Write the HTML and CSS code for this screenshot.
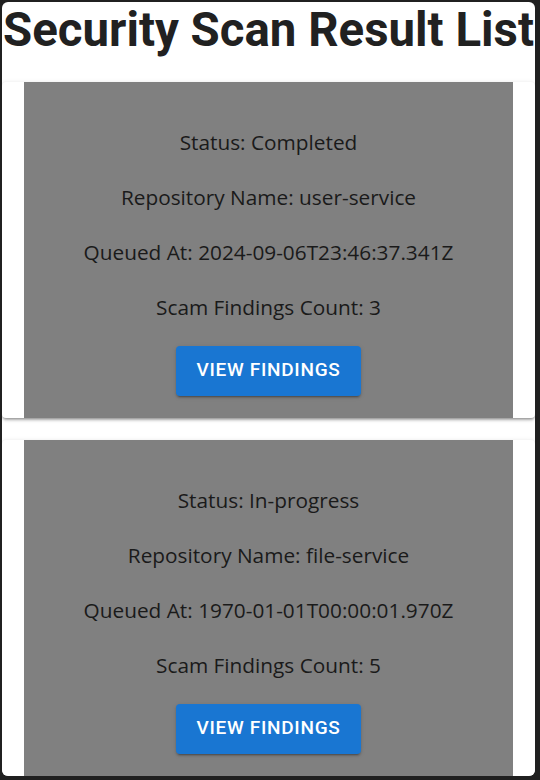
FILE: index.html
```html
<!DOCTYPE html>
<html lang="en">
<head>
<meta charset="utf-8">
<title>Security Scan Result List</title>
<link rel="stylesheet" href="styles.css">
</head>
<body>
<div class="window">
  <h1 class="title">Security Scan Result List</h1>
  <div class="list">
    <div class="card">
      <div class="content">
        <p class="line">Status: Completed</p>
        <p class="line">Repository Name: user-service</p>
        <p class="line">Queued At: 2024-09-06T23:46:37.341Z</p>
        <p class="line">Scam Findings Count: 3</p>
        <button class="btn">View Findings</button>
      </div>
    </div>
    <div class="card">
      <div class="content">
        <p class="line">Status: In-progress</p>
        <p class="line">Repository Name: file-service</p>
        <p class="line">Queued At: 1970-01-01T00:00:01.970Z</p>
        <p class="line">Scam Findings Count: 5</p>
        <button class="btn">View Findings</button>
      </div>
    </div>
  </div>
</div>
</body>
</html>
```

FILE: styles.css
```css
html, body {
  margin: 0;
  padding: 0;
  background: #202020;
  height: 780px;
  overflow: hidden;
}
.window {
  margin: 2px 5px 0 2px;
  height: 774px;
  background: #fff;
  border-radius: 6px;
  overflow: hidden;
}
.title {
  margin: 0 0 24px;
  font-family: Roboto, "Liberation Sans", sans-serif;
  font-weight: 700;
  font-size: 47.4px;
  line-height: 56px;
  color: #212121;
  text-align: center;
  white-space: nowrap;
}
.list {
  display: flex;
  flex-direction: column;
  gap: 22px;
}
.card {
  background: #fff;
  border-radius: 4px;
  box-shadow: 0 3px 3px -1px rgba(0,0,0,0.25), 0 1px 2px 0 rgba(0,0,0,0.14), 0 1px 5px 0 rgba(0,0,0,0.12);
  padding: 0 22px;
}
.content {
  background: #808080;
  display: flex;
  flex-direction: column;
  align-items: center;
  padding: 45px 0 22px;
}
.line {
  margin: 0 0 25px;
  font-family: "Open Sans", "Noto Sans", sans-serif;
  font-size: 20.8px;
  line-height: 30px;
  color: #1a1a1a;
}
.line:nth-of-type(4) {
  margin-bottom: 24px;
}
.btn {
  border: 0;
  background: #1976d2;
  color: #fff;
  font-family: Roboto, "Liberation Sans", sans-serif;
  font-weight: 500;
  font-size: 19px;
  letter-spacing: 0.7px;
  text-transform: uppercase;
  width: 185px;
  height: 50px;
  padding: 0 0 3px;
  border-radius: 4px;
  box-shadow: 0 3px 1px -2px rgba(0,0,0,0.2), 0 2px 2px 0 rgba(0,0,0,0.14), 0 1px 5px 0 rgba(0,0,0,0.12);
  cursor: pointer;
}
```
